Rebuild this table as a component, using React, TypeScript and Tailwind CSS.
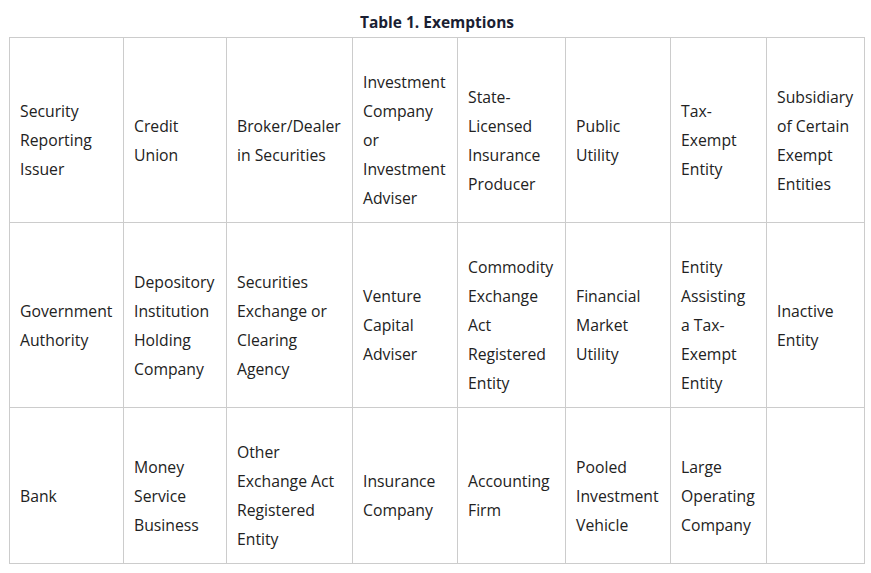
const widths = [114, 103, 126, 105, 108, 105, 96, 98];

const rows: string[][] = [
  [
    "Security Reporting Issuer",
    "Credit Union",
    "Broker/Dealer in Securities",
    "Investment Company or Investment Adviser",
    "State-Licensed Insurance Producer",
    "Public Utility",
    "Tax-Exempt Entity",
    "Subsidiary of Certain Exempt Entities",
  ],
  [
    "Government Authority",
    "Depository Institution Holding Company",
    "Securities Exchange or Clearing Agency",
    "Venture Capital Adviser",
    "Commodity Exchange Act Registered Entity",
    "Financial Market Utility",
    "Entity Assisting a Tax-Exempt Entity",
    "Inactive Entity",
  ],
  [
    "Bank",
    "Money Service Business",
    "Other Exchange Act Registered Entity",
    "Insurance Company",
    "Accounting Firm",
    "Pooled Investment Vehicle",
    "Large Operating Company",
    "",
  ],
];

export default function App() {
  return (
    <div className="min-h-screen bg-white px-[9px] pt-[11px] font-['Open_Sans',sans-serif] text-[#222]">
      <table className="w-[855px] table-fixed border-collapse">
        <caption className="pb-[4px] text-[15.5px] leading-[22px] font-bold text-[#1b1f33]">
          Table 1. Exemptions
        </caption>
        <colgroup>
          {widths.map((w, i) => (
            <col key={i} style={{ width: w }} />
          ))}
        </colgroup>
        <tbody>
          {rows.map((row, r) => (
            <tr key={r}>
              {row.map((cell, c) => (
                <td
                  key={c}
                  className="border border-[#cccccc] px-[10px] pt-[30px] pb-[9px] align-middle text-[15.75px] leading-[29px]"
                >
                  {cell}
                </td>
              ))}
            </tr>
          ))}
        </tbody>
      </table>
    </div>
  );
}
